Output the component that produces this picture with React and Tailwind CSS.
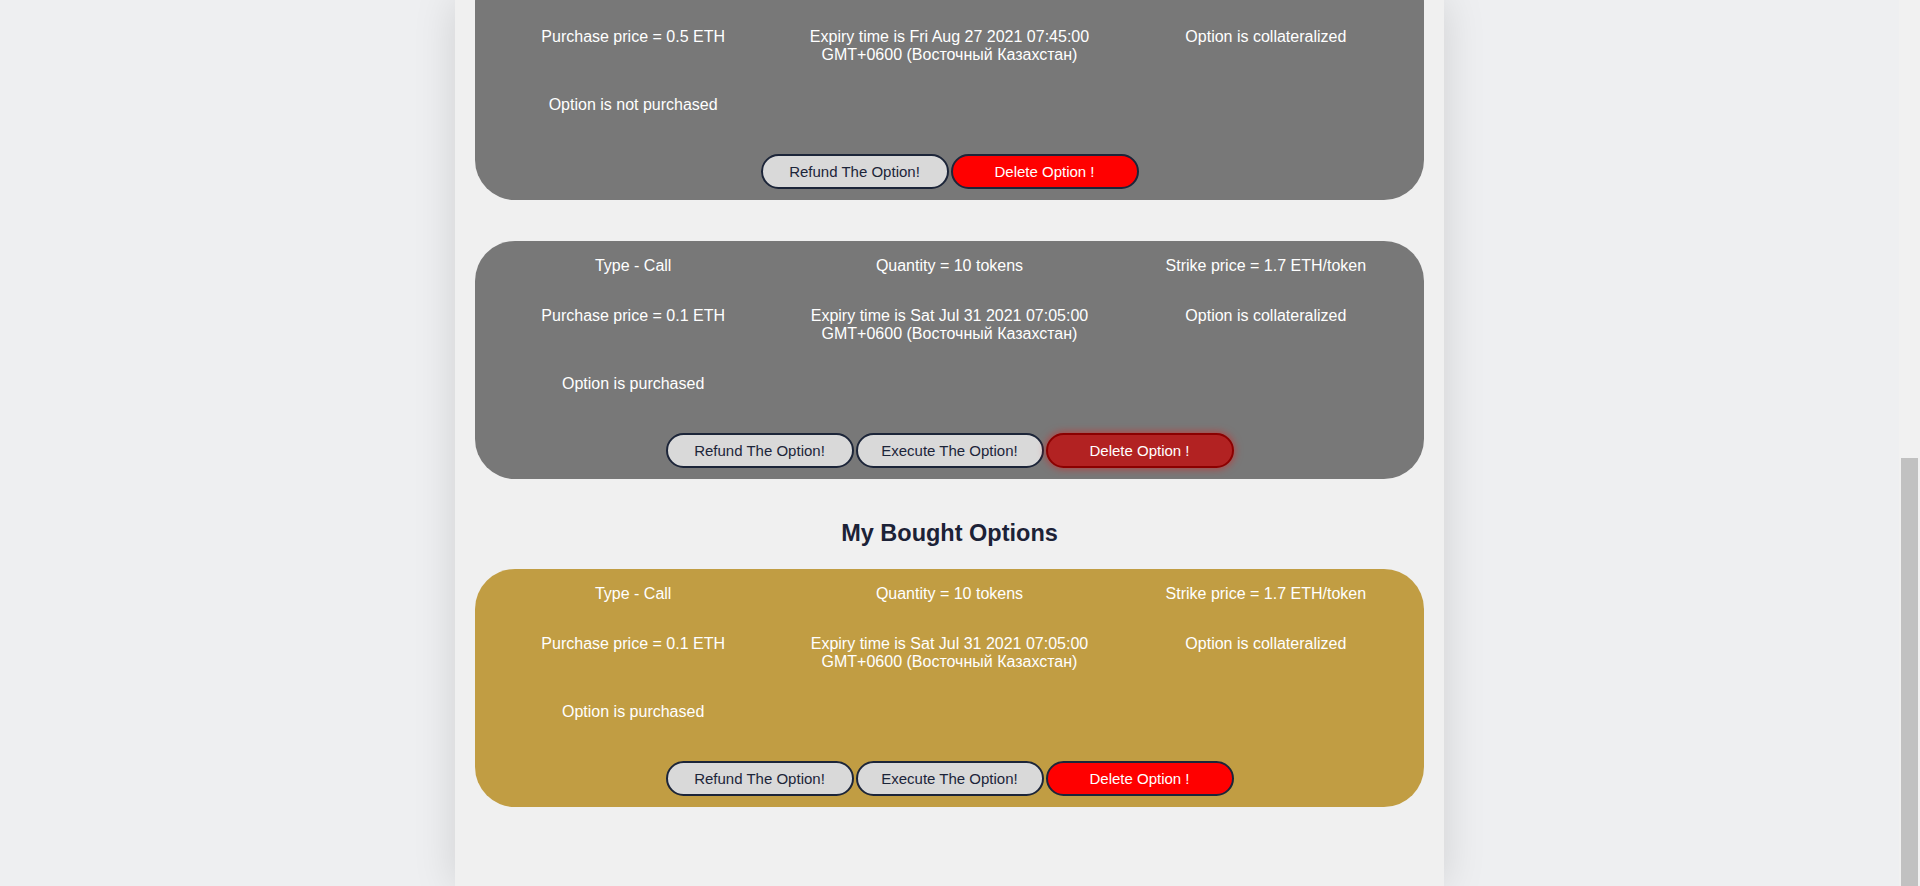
const SOLD = [
  {
    type: 'Call',
    quantity: 10,
    strike: '1.7',
    price: '0.5',
    expiry: 'Fri Aug 27 2021 07:45:00 GMT+0600 (Восточный Казахстан)',
    purchased: false,
  },
  {
    type: 'Call',
    quantity: 10,
    strike: '1.7',
    price: '0.1',
    expiry: 'Sat Jul 31 2021 07:05:00 GMT+0600 (Восточный Казахстан)',
    purchased: true,
    hoverDelete: true,
  },
];

const BOUGHT = [
  {
    type: 'Call',
    quantity: 10,
    strike: '1.7',
    price: '0.1',
    expiry: 'Sat Jul 31 2021 07:05:00 GMT+0600 (Восточный Казахстан)',
    purchased: true,
  },
];

function GreyButton({ children }) {
  return (
    <button className="w-[188px] h-[35px] rounded-full border-2 border-[#1c2539] bg-[#d9d9d9] text-[#1c2539] text-[15px] leading-none">
      {children}
    </button>
  );
}

function DeleteButton({ hover }) {
  return (
    <button
      className={
        hover
          ? 'w-[188px] h-[35px] rounded-full border-2 border-[#8b0000] bg-[#b22222] text-white text-[15px] leading-none shadow-[0_0_8px_rgba(255,0,0,0.55)]'
          : 'w-[188px] h-[35px] rounded-full border-2 border-[#1c2539] bg-[#ff0000] text-white text-[15px] leading-none'
      }
    >
      Delete Option !
    </button>
  );
}

function OptionCard({ option, gold }) {
  return (
    <div
      className={
        (gold ? 'bg-[#c19d43]' : 'bg-[#787878]') +
        ' shrink-0 rounded-[40px] pt-[16px] pb-[11px] text-white text-[16px] leading-[18px]'
      }
    >
      <div className="grid grid-cols-3 gap-y-8 text-center">
        <div>Type - {option.type}</div>
        <div>Quantity = {option.quantity} tokens</div>
        <div>Strike price = {option.strike} ETH/token</div>
        <div>Purchase price = {option.price} ETH</div>
        <div className="px-[18px]">Expiry time is {option.expiry}</div>
        <div>Option is collateralized</div>
        <div>{option.purchased ? 'Option is purchased' : 'Option is not purchased'}</div>
      </div>
      <div className="mt-[40px] flex justify-center gap-[2px]">
        <GreyButton>Refund The Option!</GreyButton>
        {option.purchased && <GreyButton>Execute The Option!</GreyButton>}
        <DeleteButton hover={option.hoverDelete} />
      </div>
    </div>
  );
}

export default function App() {
  return (
    <div className="h-[886px] flex overflow-hidden bg-[#eeeff1] font-['Liberation_Sans',Arial,sans-serif]">
      <div className="flex-1 flex justify-center">
        <div className="w-[989px] h-full bg-[#f0f0f0] px-[20px] pb-[79px] flex flex-col justify-end overflow-hidden shadow-[0_0_40px_rgba(0,0,0,0.13)]">
          <OptionCard option={SOLD[0]} />
          <div className="h-[41px] shrink-0" />
          <OptionCard option={SOLD[1]} />
          <h2 className="shrink-0 mt-[40px] mb-[22px] text-center text-[23.5px] font-bold text-[#1c2237] leading-[28px]">
            My Bought Options
          </h2>
          {BOUGHT.map((o, i) => (
            <OptionCard key={i} option={o} gold />
          ))}
        </div>
      </div>
      <div className="w-[21px] bg-[#f1f1f1] flex flex-col px-[2px]">
        <div className="h-[458px]" />
        <div className="flex-1 bg-[#c1c1c1]" />
      </div>
    </div>
  );
}
